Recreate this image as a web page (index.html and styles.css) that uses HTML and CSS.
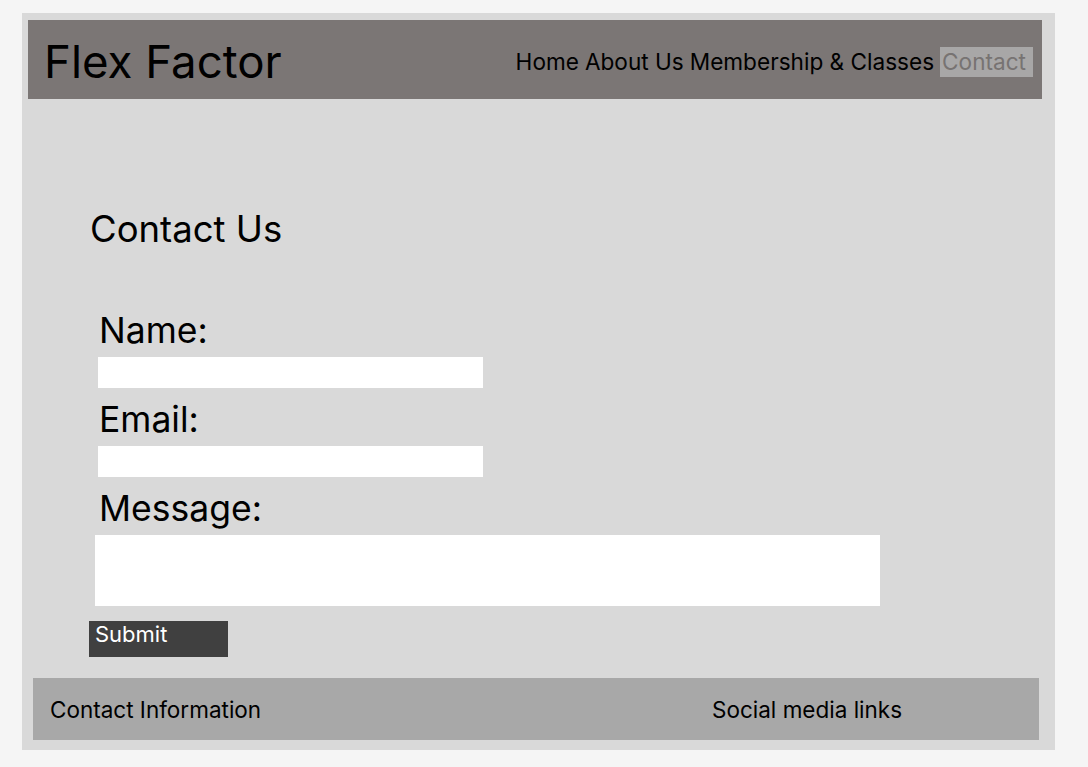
FILE: index.html
```html
<!DOCTYPE html>
<html>
<head>
<meta charset="utf-8">
<link rel="stylesheet" href="styles.css">
</head>
<body>
<div class="frame">
  <header class="header">
    <div class="logo">Flex Factor</div>
    <nav class="nav"><a class="nav-link">Home</a> <a class="nav-link">About Us</a> <a class="nav-link">Membership &amp; Classes</a> <a class="nav-link active">Contact</a></nav>
  </header>
  <main class="main">
    <h1 class="title">Contact Us</h1>
    <form class="form">
      <label class="label">Name:</label>
      <div class="input"></div>
      <label class="label">Email:</label>
      <div class="input"></div>
      <label class="label">Message:</label>
      <div class="textarea"></div>
      <div class="submit">Submit</div>
    </form>
  </main>
  <footer class="footer">
    <div class="foot-left">Contact Information</div>
    <div class="foot-right">Social media links</div>
  </footer>
</div>
</body>
</html>
```

FILE: styles.css
```css
* { box-sizing: border-box; }
html, body { margin: 0; padding: 0; }
body {
  background: #f5f5f5;
  font-family: Inter, "Liberation Sans", sans-serif;
  color: #000;
  padding: 13px 0 0 22px;
}
.frame {
  width: 1033px;
  height: 737px;
  background: #d9d9d9;
  padding: 7px 0 0 6px;
  display: flex;
  flex-direction: column;
}
.header {
  width: 1014px;
  height: 79px;
  background: #7b7675;
  display: flex;
  align-items: center;
  justify-content: space-between;
  padding: 0 9px 0 16px;
}
.logo {
  font-size: 45.6px;
  line-height: 1;
  margin-top: 4px;
}
.nav {
  font-size: 22.6px;
  display: flex;
  align-items: center;
  gap: 6px;
  margin-top: 4px;
}
.nav-link { color: #000; line-height: 30px; }
.nav-link.active {
  background: #a8a7a7;
  color: #777372;
  padding: 0 7px 0 2px;
}
.main {
  flex: 1;
  padding: 0 0 0 62px;
}
.title {
  font-weight: 400;
  font-size: 36.5px;
  line-height: 1;
  margin: 112px 0 0 0;
}
.form {
  display: flex;
  flex-direction: column;
  margin-top: 65px;
}
.label {
  font-size: 35.5px;
  line-height: 1;
  margin-left: 9px;
  height: 44px;
}
.input {
  background: #fff;
  width: 385px;
  height: 31px;
  margin-left: 8px;
  margin-bottom: 14px;
}
.textarea {
  background: #fff;
  width: 785px;
  height: 71px;
  margin-left: 5px;
}
.submit {
  margin-top: 15px;
  margin-left: -1px;
  width: 139px;
  height: 36px;
  background: #404040;
  color: #fff;
  font-size: 22px;
  line-height: 27px;
  padding-left: 6px;
}
.footer {
  width: 1006px;
  height: 62px;
  margin: 0 0 10px 5px;
  background: #a8a8a8;
  display: flex;
  align-items: center;
  font-size: 22.5px;
  padding-left: 17px;
}
.foot-left { width: 662px; }
```
